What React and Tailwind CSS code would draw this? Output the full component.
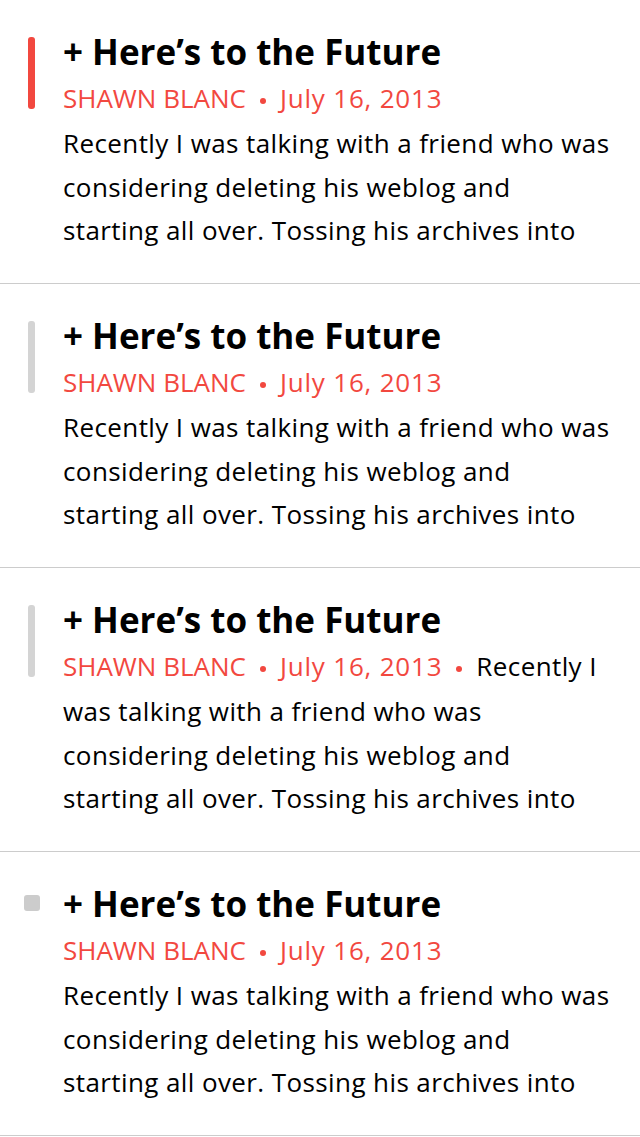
import React from "react";

const RED = "text-[#f2483f]";

const body = [
  "Recently I was talking with a friend who was",
  "considering deleting his weblog and",
  "starting all over. Tossing his archives into",
];

const inlineBody = [
  "was talking with a friend who was",
  "considering deleting his weblog and",
  "starting all over. Tossing his archives into",
];

export default function App() {
  const items = [
    { id: 1, marker: "active", inline: false },
    { id: 2, marker: "bar", inline: false },
    { id: 3, marker: "bar", inline: true },
    { id: 4, marker: "square", inline: false },
  ];

  return (
    <div className="bg-white font-['Open_Sans','Liberation_Sans',sans-serif] text-black">
      {items.map((item) => (
        <Post key={item.id} marker={item.marker} inline={item.inline} />
      ))}
    </div>
  );
}

function Marker({ type }) {
  if (type === "square") {
    return <div className="ml-[24px] mt-[43px] w-[16px] h-[16px] rounded-[3px] bg-[#cccccc]" />;
  }
  const color = type === "active" ? "bg-[#f2483f]" : "bg-[#d4d4d4]";
  return <div className={`ml-[28px] mt-[37px] w-[7px] h-[72px] rounded-[3px] ${color}`} />;
}

function Dot() {
  return <span className="inline-block align-middle mx-[14px] w-[6px] h-[6px] rounded-full bg-[#f2483f]" />;
}

function Meta() {
  return (
    <>
      <span className={RED}>SHAWN BLANC</span>
      <Dot />
      <span className={`${RED} tracking-[0.8px]`}>July 16, 2013</span>
    </>
  );
}

function Post({ marker, inline }) {
  return (
    <div className="flex h-[284px] border-b border-[#cccccc] overflow-hidden">
      <div className="w-[63px] shrink-0">
        <Marker type={marker} />
      </div>
      <div className="pt-[30px] min-w-0">
        <div className="text-[35px] leading-[44px] font-bold whitespace-nowrap">+ Here’s to the Future</div>
        {inline ? (
          <div className="text-[26px]">
            <div className="leading-[48px] whitespace-nowrap">
              <Meta />
              <Dot />
              <span className="tracking-[0.4px]">Recently I</span>
            </div>
            {inlineBody.map((line) => (
              <div key={line} className="leading-[43.5px] tracking-[0.4px] whitespace-nowrap">{line}</div>
            ))}
          </div>
        ) : (
          <div className="text-[26px]">
            <div className="leading-[48px] whitespace-nowrap">
              <Meta />
            </div>
            {body.map((line) => (
              <div key={line} className="leading-[43.5px] tracking-[0.4px] whitespace-nowrap">{line}</div>
            ))}
          </div>
        )}
      </div>
    </div>
  );
}
